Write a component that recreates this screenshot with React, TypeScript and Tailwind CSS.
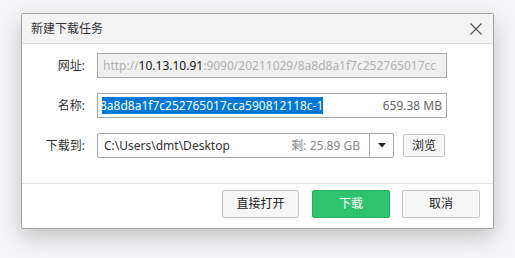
import React from 'react';

const font = { fontFamily: '"Noto Sans", "Noto Sans CJK SC", sans-serif' };

function CloseIcon() {
    return (
        <svg width="12" height="12" viewBox="0 0 12 12" className="text-[#555]">
            <path d="M0.5 0.5 L11.5 11.5 M11.5 0.5 L0.5 11.5" stroke="currentColor" strokeWidth="1.2" />
        </svg>
    );
}

export default function App() {
    return (
        <div className="w-[515px] h-[258px] bg-[#f6f6f8] pl-[21px] pt-[13px] text-[12px] text-[#333]" style={font}>
            <div className="w-[473px] h-[216px] flex flex-col bg-white border border-[#a3a3a3] rounded-[2px] shadow-[0_8px_22px_rgba(0,0,0,0.22)] overflow-hidden">
                {/* Title bar */}
                <div className="h-[30px] shrink-0 flex items-center justify-between bg-[#f3f3f3] border-b border-[#dedede] pl-[9px] pr-[11px]">
                    <span className="text-[#333]">新建下载任务</span>
                    <CloseIcon />
                </div>

                {/* Form */}
                <div className="flex-1 flex flex-col gap-[15px] pt-[9px]">
                    <div className="flex items-center">
                        <span className="w-[63px] text-right">网址:</span>
                        <div className="ml-[12px] w-[350px] h-[25px] flex items-center bg-[#f0f0f0] border border-[#a8a8a8] pl-[5px] overflow-hidden whitespace-nowrap text-[#b0b0b0]">
                            http://<span className="text-[#111]">10.13.10.91</span>:9090/20211029/8a8d8a1f7c252765017cc
                        </div>
                    </div>
                    <div className="flex items-center">
                        <span className="w-[63px] text-right">名称:</span>
                        <div className="ml-[12px] w-[350px] h-[25px] flex items-center justify-between bg-white border border-[#a8a8a8] pl-[4px] pr-[4px] whitespace-nowrap">
                            <div className="overflow-hidden">
                                <span className="block bg-[#0078d7] text-white -ml-[3px] pl-[1px] leading-[17px]">8a8d8a1f7c252765017cca590812118c-1</span>
                            </div>
                            <span className="text-[#666]">659.38 MB</span>
                        </div>
                    </div>
                    <div className="flex items-center">
                        <span className="w-[63px] text-right">下载到:</span>
                        <div className="ml-[12px] w-[297px] h-[25px] flex items-center bg-white border border-[#a8a8a8] rounded-[2px] whitespace-nowrap">
                            <span className="flex-1 pl-[6px] text-[#333]">C:\Users\dmt\Desktop</span>
                            <span className="text-[#888] pr-[9px]">剩: 25.89 GB</span>
                            <div className="w-[24px] h-full flex items-center justify-center border-l border-[#a8a8a8]">
                                <svg width="8" height="5" viewBox="0 0 8 5">
                                    <path d="M0 0 H8 L4 4.5 Z" fill="#222" />
                                </svg>
                            </div>
                        </div>
                        <button className="ml-[9px] w-[42px] h-[23px] flex items-center justify-center bg-[#f6f6f6] border border-[#c9c9c9] rounded-[2px] text-[#222]">
                            浏览
                        </button>
                    </div>
                </div>

                {/* Footer */}
                <div className="h-[45px] shrink-0 flex items-start justify-end gap-[12px] border-t border-[#e3e3e3] pt-[6px] pr-[13px]">
                    <button className="w-[77px] h-[28px] flex items-center justify-center bg-[#f6f6f6] border border-[#c6c6c6] rounded-[2px] text-[#222]">
                        直接打开
                    </button>
                    <button className="ml-[1px] w-[78px] h-[28px] flex items-center justify-center bg-[#2ec46e] border border-[#22ad5c] rounded-[2px] text-white">
                        下载
                    </button>
                    <button className="w-[78px] h-[28px] flex items-center justify-center bg-[#f6f6f6] border border-[#c6c6c6] rounded-[2px] text-[#222]">
                        取消
                    </button>
                </div>
            </div>
        </div>
    );
}
